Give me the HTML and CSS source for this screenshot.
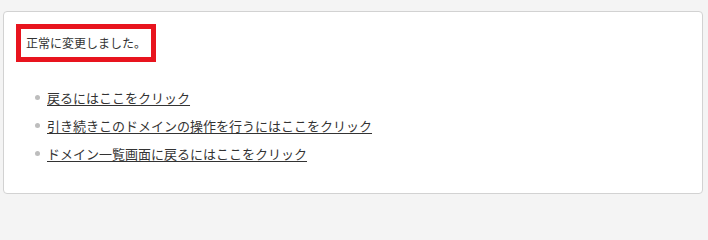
FILE: index.html
```html
<!DOCTYPE html>
<html lang="ja">
<head>
<meta charset="utf-8">
<link rel="stylesheet" href="styles.css">
</head>
<body>
<div class="card">
  <div class="notice">正常に変更しました。</div>
  <ul class="links">
    <li><a href="#">戻るにはここをクリック</a></li>
    <li><a href="#">引き続きこのドメインの操作を行うにはここをクリック</a></li>
    <li><a href="#">ドメイン一覧画面に戻るにはここをクリック</a></li>
  </ul>
</div>
</body>
</html>
```
FILE: styles.css
```css
html, body {
  margin: 0;
  background: #f4f4f4;
}
body {
  padding: 11px 5px 0 3px;
  font-family: "Noto Sans CJK JP", "Noto Sans", sans-serif;
  color: #333;
}
.card {
  box-sizing: border-box;
  width: 700px;
  height: 183px;
  background: #fff;
  border: 1px solid #d2d2d2;
  border-radius: 4px;
  padding: 12px;
}
.notice {
  display: inline-block;
  border: 5px solid #e8141e;
  padding: 0 5px;
  font-size: 12px;
  line-height: 28px;
  width: 120px;
  white-space: nowrap;
}
.links {
  list-style: none;
  margin: 21px 0 0;
  padding: 0 0 0 19px;
}
.links li {
  display: flex;
  align-items: center;
  height: 28px;
  font-size: 13px;
}
.links li::before {
  content: "";
  width: 5px;
  height: 5px;
  border-radius: 50%;
  background: #bdbdbd;
  margin-right: 7px;
  flex: none;
}
.links a {
  color: #333;
  text-decoration: underline;
  text-underline-offset: 2px;
}
```
